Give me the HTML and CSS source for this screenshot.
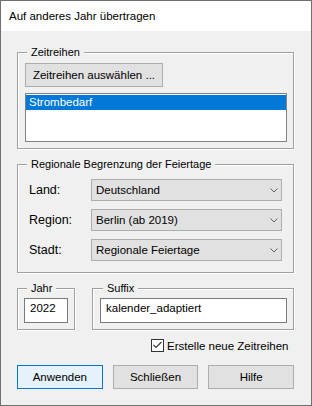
FILE: index.html
```html
<!DOCTYPE html>
<html lang="de">
<head>
    <meta charset="UTF-8">
    <title>Auf anderes Jahr übertragen</title>
    <link rel="stylesheet" href="styles.css">
</head>
<body>
<div class="window">
    <div class="titlebar">Auf anderes Jahr übertragen</div>
    <div class="content">
        <fieldset class="group">
            <legend>Zeitreihen</legend>
            <div class="series">
                <div class="btn pick">Zeitreihen auswählen ...</div>
                <ul class="listbox">
                    <li class="selected">Strombedarf</li>
                </ul>
            </div>
        </fieldset>

        <fieldset class="group region-group">
            <legend>Regionale Begrenzung der Feiertage</legend>
            <div class="region">
                <div class="row">
                    <span class="label">Land:</span>
                    <div class="combo">Deutschland<svg class="arrow" width="8" height="5" viewBox="0 0 8 5"><polyline points="0.5,0.5 4,4 7.5,0.5"/></svg></div>
                </div>
                <div class="row">
                    <span class="label">Region:</span>
                    <div class="combo">Berlin (ab 2019)<svg class="arrow" width="8" height="5" viewBox="0 0 8 5"><polyline points="0.5,0.5 4,4 7.5,0.5"/></svg></div>
                </div>
                <div class="row">
                    <span class="label">Stadt:</span>
                    <div class="combo">Regionale Feiertage<svg class="arrow" width="8" height="5" viewBox="0 0 8 5"><polyline points="0.5,0.5 4,4 7.5,0.5"/></svg></div>
                </div>
            </div>
        </fieldset>

        <div class="pair">
            <fieldset class="group year-group">
                <legend>Jahr</legend>
                <div class="year">
                    <div class="field year-field">2022</div>
                </div>
            </fieldset>
            <fieldset class="group suffix-group">
                <legend>Suffix</legend>
                <div class="suffix">
                    <div class="field suffix-field">kalender_adaptiert</div>
                </div>
            </fieldset>
        </div>

        <div class="check">
            <span class="box"><svg width="11" height="11" viewBox="0 0 11 11"><polyline points="1.5,5 4,7.5 9.5,2"/></svg></span>
            <span>Erstelle neue Zeitreihen</span>
        </div>

        <div class="buttons">
            <div class="btn default">Anwenden</div>
            <div class="btn">Schließen</div>
            <div class="btn">Hilfe</div>
        </div>
    </div>
</div>
</body>
</html>
```

FILE: styles.css
```css
*{ padding: 0; margin: 0; box-sizing: border-box;}
body{
    font-family: "Liberation Sans", Arial, sans-serif;
    font-size: 11.5px;
    color: #000;
    background: #f0f0f0;
}
.window{
    width: 312px;
    height: 406px;
    border: 1px solid #707070;
    background: #f0f0f0;
}
.titlebar{
    height: 30px;
    background: #fff;
    padding-left: 8px;
    display: flex;
    align-items: center;
}
.content{
    padding: 15px 17px 0 16px;
}

/* group boxes */
.group{
    border: 1px solid #a0a0a0;
    box-shadow: inset 1px 1px 0 #fff, 1px 1px 0 #fff;
    min-width: 0;
}
.group legend{
    margin-left: 9px;
    padding: 0 4px;
    font-size: 11px;
    line-height: 13px;
    background: #f0f0f0;
}
.region-group{
    margin-top: 9px;
}
.series{
    padding: 4px 6px 6px 7px;
}
.region{
    padding: 8px 11px 11px 11px;
    display: flex;
    flex-direction: column;
    gap: 8px;
}
.pair{
    margin-top: 9px;
    display: flex;
    gap: 17px;
}
.year-group{
    width: 58px;
}
.suffix-group{
    width: 202px;
}
.suffix-group legend{
    margin-left: 10px;
}
.year{
    padding: 3px 6px 6px 6px;
}
.suffix{
    padding: 3px 6px 6px 7px;
}

/* controls */
.btn{
    height: 24px;
    border: 1px solid #adadad;
    background: #e1e1e1;
    display: flex;
    align-items: center;
    justify-content: center;
}
.btn.default{
    border-color: #0078d7;
    background: #e5f1fb;
}
.pick{
    width: 138px;
}
.listbox{
    margin-top: 6px;
    width: 262px;
    height: 49px;
    border: 1px solid #828282;
    background: #fff;
    padding-top: 1px;
    list-style: none;
}
.listbox li{
    height: 15px;
    line-height: 15px;
    padding-left: 3px;
}
.listbox li.selected{
    background: #0078d7;
    color: #fff;
}
.row{
    display: flex;
    align-items: center;
    height: 22px;
}
.label{
    width: 62px;
    font-size: 12.5px;
}
.combo{
    width: 191px;
    height: 22px;
    border: 1px solid #adadad;
    background: #e1e1e1;
    display: flex;
    align-items: center;
    justify-content: space-between;
    padding: 0 3px 0 4px;
}
.arrow polyline{
    fill: none;
    stroke: #606060;
    stroke-width: 1;
}
.field{
    height: 25px;
    border: 1px solid #7a7a7a;
    background: #fff;
    padding: 2px 5px;
    line-height: 15px;
}
.year-field{
    width: 44px;
}
.suffix-field{
    width: 187px;
}
.check{
    margin: 8px 0 0 134px;
    height: 15px;
    display: flex;
    align-items: center;
    gap: 3px;
}
.box{
    width: 13px;
    height: 13px;
    border: 1px solid #333;
    background: #fff;
    display: flex;
}
.box polyline{
    fill: none;
    stroke: #333;
    stroke-width: 1.1;
}
.buttons{
    margin-top: 12px;
    display: flex;
    gap: 10px;
}
.buttons .btn{
    width: 86px;
}
```
